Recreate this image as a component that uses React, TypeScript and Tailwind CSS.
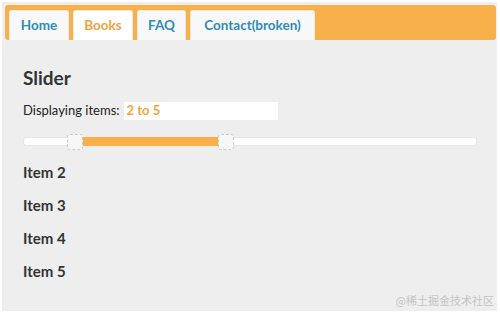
const tabs = [
    { label: "Home", active: false, w: "w-[60px]" },
    { label: "Books", active: true, w: "w-[60px]" },
    { label: "FAQ", active: false, w: "w-[49px]" },
    { label: "Contact(broken)", active: false, w: "w-[125px]" },
];

const items = ["Item 2", "Item 3", "Item 4", "Item 5"];

const Handle = () => (
    <div className="h-[16px] w-[16px] shrink-0 rounded-[3px] border border-dashed border-[#cccccc] bg-[#f7f7f7]" />
);

export default function App() {
    return (
        <div className="w-[500px] h-[314px] bg-white p-[2px] font-['Lato','Open_Sans',sans-serif]">
            <div className="relative h-[309px] w-[495px] bg-[#eeeeee] pt-[3px] pl-[3px]">
                <div className="flex h-[35px] w-[491px] items-end gap-[4px] rounded-[3px] bg-[#f7b04a] pl-[4px]">
                    {tabs.map((t) => (
                        <div
                            key={t.label}
                            className={`flex h-[30px] ${t.w} items-center justify-center rounded-t-[3px] border border-b-0 border-[#e9e9e9] text-[13.5px] font-bold ${
                                t.active ? "bg-white text-[#eba442]" : "bg-[#f8f8f8] text-[#2f8cb4]"
                            }`}
                        >
                            {t.label}
                        </div>
                    ))}
                </div>

                <div className="px-[18px] pt-[26px]">
                    <h1 className="text-[19px] font-bold leading-[24px] text-[#333333]">Slider</h1>

                    <div className="mt-[11px] flex items-center text-[13px] text-[#222222]">
                        <span>Displaying items:</span>
                        <div className="ml-[4px] flex h-[18px] w-[154px] items-center bg-white pl-[3px] font-bold text-[#f0a63a]">
                            2 to 5
                        </div>
                    </div>

                    <div className="mt-[13px] flex h-[16px] w-[454px] items-center">
                        <div className="h-[9px] w-[44px] rounded-l-[3px] border border-r-0 border-[#e6e6e6] bg-white" />
                        <Handle />
                        <div className="h-[9px] w-[135px] bg-[#f7b04a]" />
                        <Handle />
                        <div className="h-[9px] flex-1 rounded-r-[3px] border border-l-0 border-[#e6e6e6] bg-white" />
                    </div>

                    <ul className="mt-[12px] flex flex-col gap-[13px]">
                        {items.map((i) => (
                            <li key={i} className="text-[15px] font-bold leading-[20px] text-[#333333]">
                                {i}
                            </li>
                        ))}
                    </ul>
                </div>

                <div className="absolute right-[3px] bottom-[3px] font-['Noto_Sans_CJK_SC',sans-serif] text-[11px] text-[#c4c4c4]">
                    @稀土掘金技术社区
                </div>
            </div>
        </div>
    );
}
